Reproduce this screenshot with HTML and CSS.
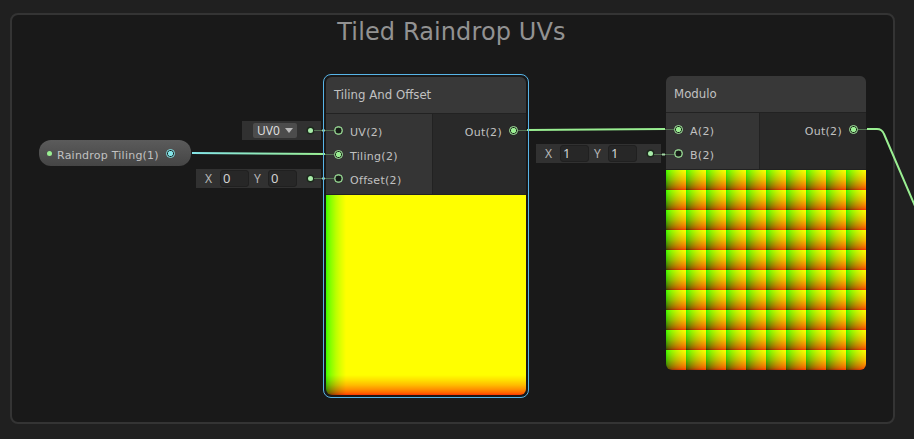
FILE: index.html
```html
<!DOCTYPE html>
<html lang="en">
<head>
<meta charset="utf-8">
<title>Tiled Raindrop UVs</title>
<link rel="stylesheet" href="styles.css">
</head>
<body>
<main class="canvas">
  <section class="group"><h1 class="group-title">Tiled Raindrop UVs</h1></section>

  <div class="property"><i class="dot"></i><span class="property-name">Raindrop Tiling(1)</span><i class="port on cyan"></i></div>

  <div class="inline-input uv"><span class="select">UV0<i class="caret"></i></span><i class="dot"></i></div>
  <div class="inline-input offset"><span class="axis">X</span><span class="field">0</span><span class="axis">Y</span><span class="field">0</span><i class="dot"></i></div>
  <div class="inline-input modulo-b"><span class="axis">X</span><span class="field">1</span><span class="axis">Y</span><span class="field">1</span><i class="dot"></i></div>

  <article class="node tiling">
    <h2 class="node-title">Tiling And Offset</h2>
    <div class="node-body">
      <div class="inputs">
        <div class="row"><i class="port"></i><span>UV(2)</span></div>
        <div class="row"><i class="port on"></i><span>Tiling(2)</span></div>
        <div class="row"><i class="port"></i><span>Offset(2)</span></div>
      </div>
      <div class="outputs"><div class="row"><span>Out(2)</span><i class="port on"></i></div></div>
    </div>
    <div class="preview clamped"></div>
  </article>
  <div class="selection"></div>

  <article class="node modulo">
    <h2 class="node-title">Modulo</h2>
    <div class="node-body">
      <div class="inputs">
        <div class="row"><i class="port on"></i><span>A(2)</span></div>
        <div class="row"><i class="port"></i><span>B(2)</span></div>
      </div>
      <div class="outputs"><div class="row"><span>Out(2)</span><i class="port on"></i></div></div>
    </div>
    <div class="preview tiled"></div>
  </article>

  <svg class="wires" width="914" height="439" viewBox="0 0 914 439" fill="none">
    <defs>
      <linearGradient id="wire" gradientUnits="userSpaceOnUse" x1="192" y1="0" x2="325" y2="0">
        <stop offset="0" stop-color="#84e4e7"/><stop offset="1" stop-color="#9aef92"/>
      </linearGradient>
    </defs>
    <g stroke="#557254" stroke-width="1">
      <path d="M314 130.5H334M325 154.5H334M314 178.5H334M518 130.5H527M654 154.5H674M665 129.5H674M858 129.5H867"/>
    </g>
    <path d="M192 153L325 154" stroke="url(#wire)" stroke-width="2"/>
    <g stroke="#9aef92" stroke-width="2">
      <path d="M527 130L665 129"/>
      <path d="M867 129H877Q882 129 884 134L915 206"/>
    </g>
    <path d="M322 130.5H325M322 178.5H325M662 154.5H665" stroke="#a3d6a5" stroke-width="2"/>
    <path d="M323.5 128V133M323.5 152V157M323.5 176V181M528.5 128V133" stroke="#58b5e8"/>
  </svg>
</main>
</body>
</html>
```

FILE: styles.css
```css
* { box-sizing: border-box; }

body {
  margin: 0;
  background: #202020;
  color: #c1c1c1;
  font: 11px "DejaVu Sans", sans-serif;
}

.canvas {
  position: relative;
  width: 914px;
  height: 439px;
  overflow: hidden;
}

.group {
  position: absolute;
  left: 10px;
  top: 13px;
  width: 885px;
  height: 411px;
  border: 2px solid #343434;
  border-radius: 8px;
  background: #191919;
}

.group-title {
  margin: 1px 0 0;
  padding-right: 2px;
  color: #929292;
  font-size: 24px;
  font-weight: 400;
  letter-spacing: .12px;
  line-height: 32px;
  text-align: center;
}

.property {
  position: absolute;
  left: 39px;
  top: 140px;
  width: 152px;
  height: 26px;
  display: flex;
  align-items: center;
  padding-left: 8px;
  border-radius: 12px;
  background: linear-gradient(#5b5b5b, #454545);
}

.property-name {
  width: 110px;
  margin: 4px 0 0 5px;
  letter-spacing: .23px;
  white-space: nowrap;
}

.dot {
  flex: none;
  width: 5px;
  height: 5px;
  border-radius: 50%;
  background: #9aef92;
}

.port {
  flex: none;
  width: 9px;
  height: 9px;
  border: 1px solid #a5eaa0;
  border-radius: 50%;
  background: #171c17;
  box-shadow: inset 0 0 0 .4px #a5eaa0;
}

.port.on { background: radial-gradient(circle, #9aef92 2.2px, #172017 3px); box-shadow: none; }

.port.cyan {
  border-color: #84e4e7;
  background: radial-gradient(circle, #84e4e7 2.2px, #172020 3px);
}

.property .port { margin-left: -1px; }

.inline-input {
  position: absolute;
  height: 19px;
  display: flex;
  align-items: center;
  background: #313131;
  font-family: "Noto Sans", sans-serif;
  font-size: 12px;
}

.inline-input .dot {
  margin-left: auto;
  margin-right: 8px;
  background: #a9edaa;
  box-shadow: 0 0 0 1.5px #1d291d;
}

.uv { left: 242px; top: 121px; width: 79px; padding-left: 11px; }
.offset { left: 196px; top: 169px; width: 125px; }
.modulo-b { left: 536px; top: 144px; width: 125px; }

.select {
  display: flex;
  align-items: center;
  gap: 5px;
  width: 44px;
  height: 15px;
  padding-left: 4px;
  border-radius: 2px;
  background: #4c4c4c;
  color: #dedede;
}

.caret {
  border: 4px solid transparent;
  border-top: 5px solid #bababa;
  border-bottom: 0;
}

.axis {
  width: 24px;
  padding-left: 9px;
  color: #b8b8b8;
}

.field + .axis { padding-left: 5px; width: 19px; }

.field {
  width: 29px;
  height: 17px;
  padding-left: 2px;
  border: 1px solid #202020;
  border-radius: 3px;
  background: #272727;
  color: #d2d2d2;
  font-size: 13px;
  line-height: 14px;
}

.node {
  position: absolute;
  width: 200px;
  border-radius: 6px;
  overflow: hidden;
  background: #222;
}

.tiling { left: 326px; top: 77px; }
.modulo { left: 666px; top: 76px; }

.selection {
  position: absolute;
  left: 323px;
  top: 74px;
  width: 206px;
  height: 324px;
  border: 1px solid #58b5e8;
  border-radius: 8px;
}

.node-title {
  height: 36px;
  margin: 0;
  padding-left: 8px;
  background: #383838;
  font-size: 11.75px;
  font-weight: 400;
  line-height: 36px;
}

.node-body {
  display: grid;
  grid-template-columns: 106px 93px;
  gap: 1px;
  height: 82px;
  padding: 1px 0;
}

.modulo .node-body { grid-template-columns: 93px 106px; height: 58px; }

.inputs { padding: 4px 0 0 8px; background: #353535; }
.outputs { padding: 4px 8px 0 0; background: #292929; }

.row {
  display: flex;
  align-items: center;
  gap: 7px;
  height: 24px;
}

.row span { padding-top: 4px; letter-spacing: .3px; }
.outputs .row { justify-content: flex-end; }

.preview { height: 200px; background-blend-mode: screen; }

.clamped,
.tiled {
  background-image:
    linear-gradient(90deg, #300000, #500000 1px, #640000 2px, #890000 5px, #bc0000 10px, #e10000 15px, #f00 20px),
    linear-gradient(0deg, #003000, #005000 1px, #006400 2px, #008900 5px, #00bc00 10px, #00e100 15px, #0f0 20px);
}

.tiled { background-size: 20px 20px; }

.wires { position: absolute; inset: 0; }
```
